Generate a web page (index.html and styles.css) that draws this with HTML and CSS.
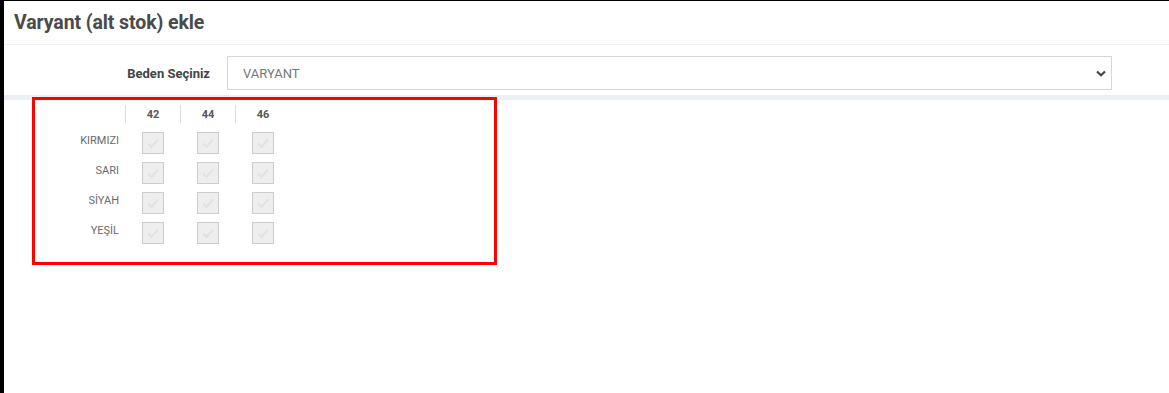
FILE: index.html
```html
<!DOCTYPE html>
<html lang="tr">
<head>
	<meta charset="UTF-8">
	<title>Varyant ekle</title>
	<link rel="stylesheet" href="styles.css">
</head>
<body>
<div class="panel">
	<div class="panel_head">
		<h3 class="title">Varyant (alt stok) ekle</h3>
	</div>
	<div class="form_row">
		<label class="form_label">Beden Seçiniz</label>
		<div class="select">
			<span class="select_text">VARYANT</span>
			<svg class="select_arrow" width="10" height="7" viewBox="0 0 10 7"><path d="M1 1.5 L5 5.2 L9 1.5" fill="none" stroke="#444" stroke-width="2.2"/></svg>
		</div>
	</div>
	<div class="band"></div>
	<div class="variants">
		<div class="grid">
			<div class="cell head"></div>
			<div class="cell head num">42</div>
			<div class="cell head num">44</div>
			<div class="cell head num">46</div>

			<div class="cell name">KIRMIZI</div>
			<div class="cell"><span class="chk"><svg viewBox="0 0 20 20"><path d="M5 10.5 L8.5 14 L15 6.5"/></svg></span></div>
			<div class="cell"><span class="chk"><svg viewBox="0 0 20 20"><path d="M5 10.5 L8.5 14 L15 6.5"/></svg></span></div>
			<div class="cell"><span class="chk"><svg viewBox="0 0 20 20"><path d="M5 10.5 L8.5 14 L15 6.5"/></svg></span></div>

			<div class="cell name">SARI</div>
			<div class="cell"><span class="chk"><svg viewBox="0 0 20 20"><path d="M5 10.5 L8.5 14 L15 6.5"/></svg></span></div>
			<div class="cell"><span class="chk"><svg viewBox="0 0 20 20"><path d="M5 10.5 L8.5 14 L15 6.5"/></svg></span></div>
			<div class="cell"><span class="chk"><svg viewBox="0 0 20 20"><path d="M5 10.5 L8.5 14 L15 6.5"/></svg></span></div>

			<div class="cell name">SİYAH</div>
			<div class="cell"><span class="chk"><svg viewBox="0 0 20 20"><path d="M5 10.5 L8.5 14 L15 6.5"/></svg></span></div>
			<div class="cell"><span class="chk"><svg viewBox="0 0 20 20"><path d="M5 10.5 L8.5 14 L15 6.5"/></svg></span></div>
			<div class="cell"><span class="chk"><svg viewBox="0 0 20 20"><path d="M5 10.5 L8.5 14 L15 6.5"/></svg></span></div>

			<div class="cell name">YEŞİL</div>
			<div class="cell"><span class="chk"><svg viewBox="0 0 20 20"><path d="M5 10.5 L8.5 14 L15 6.5"/></svg></span></div>
			<div class="cell"><span class="chk"><svg viewBox="0 0 20 20"><path d="M5 10.5 L8.5 14 L15 6.5"/></svg></span></div>
			<div class="cell"><span class="chk"><svg viewBox="0 0 20 20"><path d="M5 10.5 L8.5 14 L15 6.5"/></svg></span></div>
		</div>
	</div>
	<div class="mark"></div>
</div>
</body>
</html>
```

FILE: styles.css
```css
html, body { margin: 0; padding: 0; height: 100%; }
body { background: #fff; border-left: 4px solid #000; font-family: Roboto, "Liberation Sans", sans-serif; color: #555; }

.panel { position: relative; height: 100%; border-top: 1px solid #000; box-sizing: border-box; }

.panel_head { height: 43px; border-bottom: 1px solid #f0f0f0; padding: 0 10px; display: flex; align-items: center; }
.title { margin: 0; font-size: 19.5px; font-weight: bold; color: #4a4a4a; letter-spacing: -0.1px; }

.form_row { display: flex; align-items: center; padding: 11px 57px 5px 0; }
.form_label { width: 206px; text-align: right; font-size: 13px; font-weight: bold; color: #444; }
.select { flex: 1; margin-left: 17px; height: 32px; border: 1px solid #d3d6da; display: flex; align-items: center; padding: 0 5px 0 15px; }
.select_text { flex: 1; font-size: 13px; color: #777; }

.band { height: 5px; background: #ebeef2; }

.variants { padding: 5px 0 0 41px; }
.grid { display: grid; grid-template-columns: 80px 55px 55px 55px; grid-template-rows: 18px repeat(4, 30px); }
.cell { display: flex; justify-content: center; align-items: flex-start; padding-top: 9px; }
.head { padding-top: 0; align-items: center; }
.num { border-left: 1px solid #ddd; font-size: 11px; font-weight: bold; color: #555; }
.name { justify-content: flex-end; padding: 7px 6px 0 0; line-height: 22px; font-size: 11px; color: #6a6a6a; }

.chk { display: block; width: 20px; height: 20px; background: #eee; border: 1px solid #ccc; }
.chk svg { display: block; width: 20px; height: 20px; }
.chk path { fill: none; stroke: #e2e2e2; stroke-width: 2; }

.mark { position: absolute; left: 28px; top: 96px; width: 459px; height: 162px; border: 3px solid #f00; }
```
